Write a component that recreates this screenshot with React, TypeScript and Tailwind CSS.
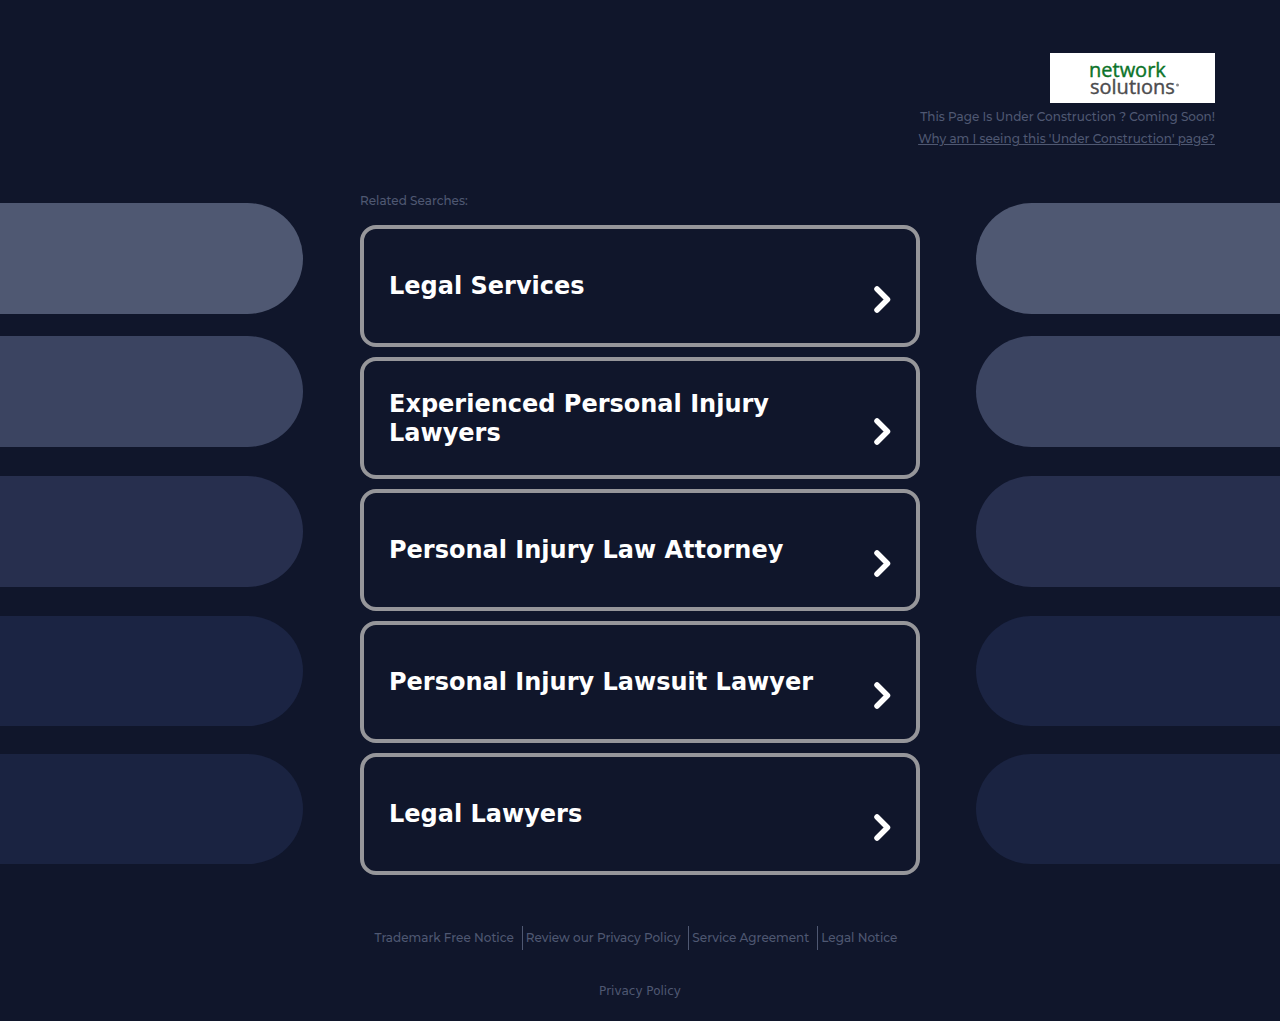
import clsx from 'clsx'

const searches = [
  'Legal Services',
  'Experienced Personal Injury Lawyers',
  'Personal Injury Law Attorney',
  'Personal Injury Lawsuit Lawyer',
  'Legal Lawyers',
]

const footerLinks = [
  'Trademark Free Notice',
  'Review our Privacy Policy',
  'Service Agreement',
  'Legal Notice',
]

const bars = [
  'h-[111px] bg-[#4f5872]',
  'mt-[22px] h-[111px] bg-[#3b4461]',
  'mt-[29px] h-[111px] bg-[#272f4e]',
  'mt-[29px] h-[110px] bg-[#1b2443]',
  'mt-[28px] h-[110px] bg-[#1a2341]',
]

function Bars({ side }: { side: 'left' | 'right' }) {
  return (
    <div className="min-w-0 flex-1 pt-[13px]" aria-hidden="true">
      {bars.map((bar) => (
        <div
          key={bar}
          className={clsx(bar, side === 'left' ? 'mr-[57px] rounded-r-full' : 'ml-[56px] rounded-l-full')}
        />
      ))}
    </div>
  )
}

function Logo() {
  return (
    <svg width="165" height="50" viewBox="0 0 165 50" role="img" aria-label="network solutions" className="bg-white">
      <g fontFamily="'Open Sans', 'Noto Sans', sans-serif" fontSize="20" strokeWidth="0.4">
        <text x="39" y="24" fill="#0b7329" stroke="#0b7329">network</text>
        <text x="40" y="41" fill="#4c4c4e" stroke="#4c4c4e">solutıons</text>
      </g>
      <circle cx="127.5" cy="32" r="1.5" fill="#8a8a8c" />
    </svg>
  )
}

function Chevron() {
  return (
    <svg width="18" height="28" viewBox="0 0 18 28" fill="none" className="mt-[25px] shrink-0" aria-hidden="true">
      <path d="M4 4L14.500 14.500L4 25" stroke="#fff" strokeWidth="5.500" strokeLinecap="round" strokeLinejoin="round" />
    </svg>
  )
}

export default function App() {
  return (
    <div className="min-h-screen bg-[#10162b] pb-[18px] font-['Montserrat',Inter,sans-serif] text-[12px] font-medium text-[#4f5872]">
      <header className="flex flex-col items-end px-[65px] pt-[53px] leading-[22px]">
        <Logo />
        <p className="mt-[3px]">This Page Is Under Construction ? Coming Soon!</p>
        <a href="#" className="underline">Why am I seeing this 'Under Construction' page?</a>
      </header>

      <div className="mt-10 flex">
        <Bars side="left" />
        <main className="w-[560px] max-w-full">
          <h1 className="leading-[22px]">Related Searches:</h1>
          <ul className="mt-[13px] flex flex-col gap-[10px]">
            {searches.map((label) => (
              <li key={label}>
                <a
                  href="#"
                  className="flex min-h-[122px] items-center justify-between gap-10 rounded-[16px] border-4 border-[#96969a] px-[25px] pt-px font-['DejaVu_Sans',sans-serif] text-[24px] leading-[29px] font-bold text-white"
                >
                  <span>{label}</span>
                  <Chevron />
                </a>
              </li>
            ))}
          </ul>
        </main>
        <Bars side="right" />
      </div>

      <footer className="mt-[51px] flex flex-col items-center">
        <nav className="mr-2 flex leading-[24px]">
          {footerLinks.map((label, i) => (
            <a
              key={label}
              href="#"
              className={clsx(i > 0 && 'pl-[3px]', i < footerLinks.length - 1 && 'border-r border-[#4f5872] pr-2')}
            >
              {label}
            </a>
          ))}
        </nav>
        <a href="#" className="mt-[30px] font-['DejaVu_Sans',sans-serif] font-normal leading-[22px]">Privacy Policy</a>
      </footer>
    </div>
  )
}
